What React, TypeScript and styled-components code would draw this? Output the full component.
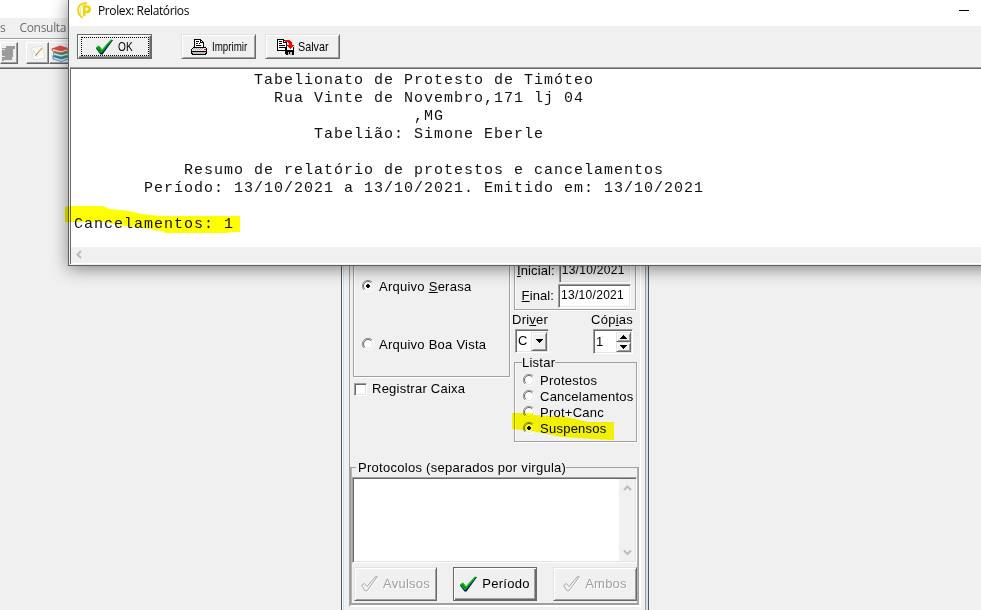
import React from "react";
import styled, { createGlobalStyle, css } from "styled-components";

const Global = createGlobalStyle`
  html, body { margin: 0; padding: 0; overflow: hidden; background: #f0f0f0; }
  * { box-sizing: border-box; }
`;

const uiFont = css`
  font-family: "Liberation Sans", Arial, sans-serif;
  font-size: 13px;
  letter-spacing: 0.25px;
  line-height: 16px;
  white-space: nowrap;
  color: #000;
`;

const Desktop = styled.div`
  position: relative;
  display: flex;
  flex-direction: column;
  width: 981px;
  height: 610px;
  overflow: hidden;
  background: #f0f0f0;
  ${uiFont}
`;

/* ---------- main application behind ---------- */

const AppCaption = styled.div`
  flex: none;
  height: 18px;
  background: #fff;
`;

const MenuBar = styled.div`
  flex: none;
  display: flex;
  gap: 14px;
  height: 20px;
  font: 12px/20px "Open Sans", "Noto Sans", sans-serif;
  letter-spacing: -0.3px;
  color: #6d6d6d;
`;

const ToolStrip = styled.div`
  flex: none;
  display: flex;
  height: 31px;
  padding-top: 3px;
  border-top: 1px solid #a0a0a0;
  border-bottom: 1px solid #696969;
  box-shadow: inset 0 1px #fff, inset 0 -1px #a0a0a0;
`;

const ToolButton = styled.div<{ $w: number; $gap?: number }>`
  display: flex;
  align-items: center;
  justify-content: center;
  width: ${(p) => p.$w}px;
  height: 22px;
  margin-right: ${(p) => p.$gap ?? 0}px;
  border: 1px solid;
  border-color: #fff #696969 #696969 #fff;
  box-shadow: inset -1px -1px #a0a0a0;
`;

const Workspace = styled.div`
  flex: 1;
  display: flex;
  padding-left: 341px;
`;

/* ---------- form window ---------- */

const FormWindow = styled.div`
  width: 308px;
  height: 541px;
  border-left: 1px solid #50555a;
  border-right: 1px solid #50555a;
  box-shadow: inset 1px 0 #fff, inset 2px 0 #cfe0ee, inset -2px 0 #d3e0ec, inset -3px 0 #969ca4;
  padding: 180px 7px 0 7px;
`;

const Panel = styled.div`
  width: 292px;
  height: 358px;
  border-left: 1px solid #a0a0a0;
  border-right: 1px solid #fff;
  border-bottom: 1px solid #fff;
`;

const Columns = styled.div`
  display: flex;
  gap: 3px;
  height: 218px;
  padding-left: 3px;
`;

const LeftColumn = styled.div`
  width: 158px;
`;

const RightColumn = styled.div`
  width: 123px;
`;

const Etched = styled.div<{ $h: number }>`
  height: ${(p) => p.$h}px;
  border: 1px solid #a0a0a0;
  box-shadow: 1px 1px #fff, inset 1px 0 #fff;
`;

const FileGroup = styled(Etched)`
  width: 157px;
  padding: 29px 0 0 8px;
`;

const Choice = styled.label<{ $h: number; $gap: number }>`
  display: flex;
  align-items: center;
  gap: ${(p) => p.$gap}px;
  height: ${(p) => p.$h}px;
`;

const RadioSlot = styled.span`
  display: flex;
  height: 14px;
`;

const CheckRow = styled.div`
  display: flex;
  align-items: center;
  gap: 5px;
  height: 16px;
  margin: 4px 0 0 1px;
`;

const CheckBox = styled.span`
  width: 13px;
  height: 13px;
  background: #fff;
  border: 1px solid;
  border-color: #a0a0a0 #fff #fff #a0a0a0;
  box-shadow: inset 1px 1px #696969, inset -1px -1px #e3e3e3;
`;

const DateGroup = styled(Etched)`
  width: 122px;
  padding: 9px 4px 0 2px;
`;

const Field = styled.div`
  display: flex;
  justify-content: flex-end;
  align-items: center;
  gap: 4px;
  height: 23px;
  margin-bottom: 2px;
  letter-spacing: 0.1px;
`;

const Edit = styled.div<{ $w: number; $h: number; $dim?: boolean }>`
  display: flex;
  align-items: center;
  width: ${(p) => p.$w}px;
  height: ${(p) => p.$h}px;
  padding: 0 0 1px 2px;
  font-size: 12px;
  letter-spacing: 0.3px;
  background: ${(p) => (p.$dim ? "#f0f0f0" : "#fff")};
  border: 1px solid;
  border-color: #a0a0a0 #fff #fff #a0a0a0;
  box-shadow: inset 1px 1px #696969, inset -1px -1px #e3e3e3;
`;

const DriverRow = styled.div`
  display: flex;
  justify-content: space-between;
  height: 16px;
  margin: 2px 4px 0 -2px;
`;

const PickerRow = styled.div`
  display: flex;
  justify-content: space-between;
  height: 25px;
  margin: 1px 4px 0 1px;
`;

const Picker = styled(Edit)`
  justify-content: space-between;
  padding: 2px 1px 2px 2px;
  font-size: 13px;
`;

const DropButton = styled.span`
  display: flex;
  align-items: center;
  justify-content: center;
  width: 16px;
  height: 19px;
  background: #f0f0f0;
  border: 1px solid;
  border-color: #e3e3e3 #696969 #696969 #e3e3e3;
  box-shadow: inset 1px 1px #fff, inset -1px -1px #a0a0a0;
`;

const Spinner = styled.span`
  display: flex;
  flex-direction: column;
  width: 15px;
`;

const SpinButton = styled(DropButton)`
  width: 15px;
  height: 10px;
`;

const Legend = styled.span`
  display: block;
  width: max-content;
  height: 16px;
  background: #f0f0f0;
`;

const ListGroup = styled(Etched)`
  width: 123px;
  margin-top: 8px;
  padding-left: 7px;
`;

const ListLegend = styled(Legend)`
  margin-top: -8px;
`;

const Options = styled.div`
  padding: 2px 0 0 1px;
`;

const ProtocolGroup = styled.div`
  width: 289px;
  height: 138px;
  border: 1px solid #a0a0a0;
  border-bottom-width: 2px;
  box-shadow: inset 1px 0 #b4b4b4, inset -1px 0 #b4b4b4, 1px 1px #fff;
  padding: 0 1px;
`;

const ProtocolLegend = styled(Legend)`
  margin: -8px 0 0 4px;
  padding-left: 2px;
  letter-spacing: 0.28px;
`;

const Memo = styled.div`
  display: flex;
  justify-content: flex-end;
  width: 285px;
  height: 86px;
  margin-top: 1px;
  padding: 1px 1px 1px 2px;
  background: #fff;
  border: 1px solid;
  border-color: #a0a0a0 #fff #fff #a0a0a0;
  box-shadow: inset 1px 1px #696969, inset -1px -1px #e3e3e3;
`;

const VScroll = styled.div`
  display: flex;
  flex-direction: column;
  justify-content: space-between;
  align-items: center;
  width: 16px;
  padding: 5px 0 4px;
  background: #f0f0f0;
`;

const ButtonRow = styled.div`
  display: flex;
  gap: 16px;
  padding: 4px 0 0 2px;
`;

const Button = styled.div<{ $w: number; $h: number; $primary?: boolean; $gap?: number; $muted?: boolean }>`
  display: flex;
  align-items: center;
  justify-content: center;
  gap: ${(p) => p.$gap ?? 5}px;
  width: ${(p) => p.$w}px;
  height: ${(p) => p.$h}px;
  background: #f0f0f0;
  color: ${(p) => (p.$muted ? "#a0a0a0" : "#000")};
  text-shadow: ${(p) => (p.$muted ? "1px 1px #fff" : "none")};
  border: 1px solid;
  border-color: ${(p) => (p.$primary ? "#696969" : "#e3e3e3 #696969 #696969 #e3e3e3")};
  box-shadow: ${(p) =>
    p.$primary
      ? "inset 1px 1px #fff, inset -1px -1px #696969, inset -2px -2px #a0a0a0"
      : "inset 1px 1px #fff, inset -1px -1px #a0a0a0"};
`;

/* ---------- report window ---------- */

const ReportWindow = styled.div`
  position: absolute;
  left: 68px;
  top: -4px;
  width: 960px;
  height: 270px;
  display: flex;
  flex-direction: column;
  background: #f0f0f0;
  border: 1px solid #606060;
  box-shadow: 0 3px 16px rgba(0, 0, 0, 0.45);
`;

const TitleBar = styled.div`
  flex: none;
  display: flex;
  align-items: center;
  height: 29px;
  padding: 0 0 2px 8px;
  background: #fff;
  font: 12px/27px "Open Sans", "Noto Sans", sans-serif;
  letter-spacing: -0.38px;
`;

const Title = styled.span`
  width: 92px;
  margin-left: 6px;
`;

const Minimize = styled.span`
  width: 10px;
  height: 1px;
  margin-left: 769px;
  background: #000;
`;

const Actions = styled.div`
  flex: none;
  display: flex;
  height: 41px;
  padding: 8px 0 0 8px;
`;

const ActionSlot = styled.div<{ $after: number }>`
  margin-right: ${(p) => p.$after}px;
`;

const FocusRing = styled.span`
  display: flex;
  align-items: center;
  justify-content: center;
  gap: 5px;
  width: 68px;
  height: 19px;
  border: 1px dotted #000;
`;

const Narrow = styled.span<{ $w: number; $k: number }>`
  display: block;
  width: ${(p) => p.$w}px;
  font-size: 13px;
  letter-spacing: 0;
  transform: scaleX(${(p) => p.$k});
  transform-origin: 0 50%;
`;

const Report = styled.div`
  flex: 1;
  display: flex;
  flex-direction: column;
  margin: 0 0 1px 1px;
  border-top: 1px solid #a0a0a0;
  border-left: 1px solid #696969;
  box-shadow: inset 0 1px #696969;
  background: #fff;
`;

const ReportText = styled.pre`
  flex: 1;
  margin: 0;
  padding: 4px 0 0 3px;
  font: 15px/18px "Liberation Mono", "Courier New", monospace;
  letter-spacing: 1px;
  color: #111;
`;

const HScroll = styled.div`
  display: flex;
  align-items: center;
  height: 17px;
  padding: 0 0 1px 4px;
  background: #f0f0f0;
  border-bottom: 1px solid #fff;
`;

const Marker = styled.svg<{ $x: number; $y: number }>`
  position: absolute;
  left: ${(p) => p.$x}px;
  top: ${(p) => p.$y}px;
  mix-blend-mode: multiply;
  pointer-events: none;
`;

/* ---------- drawings ---------- */

const Check = () => (
  <svg width="17" height="16" viewBox="0 0 17 16">
    <path d="M0 9.5 3 7.5 6 11 14.5 1 17 1 6.5 15.5 4.5 15.5Z" fill="#000060" />
    <path d="M0 8.5 3 6.5 6 10.5 15 0.5 16.5 1 6 14 4 14Z" fill="#009a10" />
    <path d="M1 8 3 7 6 11 15 1" fill="none" stroke="#20d030" strokeWidth="1" />
  </svg>
);

const MutedCheck = () => (
  <svg width="17" height="16" viewBox="0 0 17 16">
    <path d="M1.5 10.5 4.5 8.5 6.5 11 14.5 2 17 2 6.5 15.8 5 15.8Z" fill="none" stroke="#fff" />
    <path d="M.5 9.5 3.5 7.5 6 10.5 14 1 16.3 .7 6 14.8 4.2 14.8Z" fill="#f0f0f0" stroke="#a0a0a0" strokeWidth=".9" />
  </svg>
);

const Printer = () => (
  <svg width="17" height="16" viewBox="0 0 17 16" shapeRendering="crispEdges">
    <path d="M3.5.5h6l3 3v5h-9z" fill="#fff" stroke="#000" />
    <path d="M9.5.5v3h3M5 2.5h3M5 4.5h2M8 4.5h1M5 6.5h5" stroke="#000" fill="none" />
    <path d="M2.5 8.5h12l1 1v3H.5v-2z" fill="#e8e8e8" stroke="#000" />
    <path d="M.5 12.5h15v2h-1v1h-13v-1h-1z" fill="#bdbdbd" stroke="#000" />
    <path d="M3 9.5h10M2 10.5h10" stroke="#aaa" strokeDasharray="1 1" />
    <path d="M13 10h2v1h-2z" fill="#e00000" />
  </svg>
);

const SaveIcon = () => (
  <svg width="17" height="16" viewBox="0 0 17 16" shapeRendering="crispEdges">
    <path d="M.5.5h6l3 3v8h-9z" fill="#fff" stroke="#000" />
    <path d="M6.5.5v3h3M2 2.5h3M2 4.5h3M2 6.5h6M2 8.5h6" stroke="#000" fill="none" />
    <path d="M8 1h5v1h1v1h1v3h2v1h-1v1h-1v1h-1v1h-1V9h-1V8h-1V7h-1V6h2V4h-1V3H8z" fill="#f00" />
    <path d="M8 8h3v2h4V8h2v8H9v-1H8z" fill="#000" />
    <path d="M10 8h1v1h1v1h2V9h1V8h1v3h-6z" fill="#fff" />
    <path d="M11 13h4v3h-4z" fill="#b8b8b8" />
    <path d="M12 13h1v2h-1z" fill="#000" />
  </svg>
);

const Logo = () => (
  <svg width="15" height="17" viewBox="0 0 15 17">
    <path d="M10 1.2C4 .5 1 4 1 8s3 7.5 5 7.6" fill="none" stroke="#f0d000" strokeWidth="1.6" />
    <path d="M9.5 2.2C5 2.5 3.2 5.5 3.2 8.2S4 12 4.5 13" fill="none" stroke="#f5e25a" strokeWidth="1" />
    <path d="M7.2 14V4.5H10c3.6 0 3.6 5.5 0 5.5H8" fill="none" stroke="#f2d40a" strokeWidth="2.6" />
  </svg>
);

const Machine = () => (
  <svg width="15" height="18" viewBox="0 0 15 18" shapeRendering="crispEdges">
    <path d="M0 4h4V2h9v3h-2v8h-1v3H2v1H0z" fill="#9c9c9c" />
    <path d="M0 5.5h3M0 12.5h3M11.5 5v8M10.5 13v3H3" fill="none" stroke="#e8e8e8" />
  </svg>
);

const NoteIcon = () => (
  <svg width="18" height="18" viewBox="0 0 18 18">
    <path d="M2 4 13 2 16 14 5 16Z" fill="#fbfbfb" stroke="#e2e2e2" />
    <path d="M4 6 8 13" stroke="#d0d0d0" />
    <path d="M8 10 13 4" stroke="#e9a765" strokeWidth="1.4" />
    <path d="M6.5 11.5 8.2 9.8" stroke="#777" />
  </svg>
);

const Books = () => (
  <svg width="18" height="18" viewBox="0 0 18 18">
    <path d="M1 12 9 9l9 3-8 4.5z" fill="#2e7fb4" />
    <path d="M2 12.5 10 15l8-2v2l-8 2.5L2 15z" fill="#d6e6ee" stroke="#286f9e" strokeWidth=".7" />
    <path d="M2 8 9 5.5 18 8l-8 4z" fill="#2f9a63" />
    <path d="M2.5 8.5 10 10.8l8-2v2L10 13l-7.5-2z" fill="#e7f1ea" stroke="#2d8a5b" strokeWidth=".7" />
    <path d="M1 4.5 9 1.5 17 4l-7 3.5z" fill="#df4d43" />
    <path d="M1 4.5 10 6.8l7-2v2L10 9 1.5 7z" fill="#f2e6e2" stroke="#d63c34" strokeWidth=".8" />
  </svg>
);

const Radio = ({ on }: { on?: boolean }) => (
  <RadioSlot>
    <svg width="12" height="12" viewBox="0 0 12 12">
      <circle cx="6" cy="6" r="5" fill="#fff" />
      <path d="M2 10A5.5 5.5 0 0 1 10 2" fill="none" stroke="#909090" />
      <path d="M2.8 9.2A4.5 4.5 0 0 1 9.2 2.8" fill="none" stroke="#696969" />
      <path d="M10 2A5.5 5.5 0 0 1 2 10" fill="none" stroke="#fff" />
      <path d="M9.2 2.8A4.5 4.5 0 0 1 2.8 9.2" fill="none" stroke="#e3e3e3" />
      {on && <path d="M5 4h2v1h1v2H7v1H5V7H4V5h1z" fill="#000" shapeRendering="crispEdges" />}
    </svg>
  </RadioSlot>
);

const Triangle = ({ up }: { up?: boolean }) => (
  <svg width="7" height="4" viewBox="0 0 7 4" shapeRendering="crispEdges">
    <path d={up ? "M3 0h1v1h1v1h1v1h1v1H0V3h1V2h1V1h1z" : "M0 0h7v1H6v1H5v1H4v1H3V3H2V2H1V1H0z"} fill="#000" />
  </svg>
);

const chevrons = { up: "M1 6 4.5 2.5 8 6", down: "M1 2.5 4.5 6 8 2.5", left: "M6 1 2.5 4.5 6 8" };
const Chevron = ({ dir }: { dir: keyof typeof chevrons }) => (
  <svg width="9" height="9" viewBox="0 0 9 9">
    <path d={chevrons[dir]} fill="none" stroke="#bcbcbc" strokeWidth="2" />
  </svg>
);

const pad = (n: number, s: string) => " ".repeat(n) + s;
const lines = [
  pad(18, "Tabelionato de Protesto de Timóteo"),
  pad(20, "Rua Vinte de Novembro,171 lj 04"),
  pad(34, ",MG"),
  pad(24, "Tabelião: Simone Eberle"),
  "",
  pad(11, "Resumo de relatório de protestos e cancelamentos"),
  pad(7, "Período: 13/10/2021 a 13/10/2021. Emitido em: 13/10/2021"),
  "",
  "Cancelamentos: 1",
];

const listOptions = ["Protestos", "Cancelamentos", "Prot+Canc", "Suspensos"];

export default function App() {
  return (
    <Desktop>
      <Global />
      <AppCaption />
      <MenuBar>
        <span>s</span>
        <span>Consulta</span>
      </MenuBar>
      <ToolStrip>
        <ToolButton $w={18} $gap={8}><Machine /></ToolButton>
        <ToolButton $w={23}><NoteIcon /></ToolButton>
        <ToolButton $w={22}><Books /></ToolButton>
      </ToolStrip>
      <Workspace>
        <FormWindow>
          <Panel>
            <Columns>
              <LeftColumn>
                <FileGroup $h={128}>
                  <Choice $h={16} $gap={5}><Radio on /><span>Arquivo <u>S</u>erasa</span></Choice>
                  <Choice $h={100} $gap={5}><Radio /><span>Arquivo Boa Vista</span></Choice>
                </FileGroup>
                <CheckRow><CheckBox /><span>Registrar Caixa</span></CheckRow>
              </LeftColumn>
              <RightColumn>
                <DateGroup $h={61}>
                  <Field><span><u>I</u>nicial:</span><Edit $w={73} $h={24} $dim>13/10/2021</Edit></Field>
                  <Field><span><u>F</u>inal:</span><Edit $w={73} $h={24}>13/10/2021</Edit></Field>
                </DateGroup>
                <DriverRow><span>Dri<u>v</u>er</span><span>Cóp<u>i</u>as</span></DriverRow>
                <PickerRow>
                  <Picker $w={34} $h={24}>C<DropButton><Triangle /></DropButton></Picker>
                  <Picker $w={40} $h={25}>
                    1
                    <Spinner>
                      <SpinButton><Triangle up /></SpinButton>
                      <SpinButton><Triangle /></SpinButton>
                    </Spinner>
                  </Picker>
                </PickerRow>
                <ListGroup $h={80}>
                  <ListLegend>Listar</ListLegend>
                  <Options>
                    {listOptions.map((o) => (
                      <Choice key={o} $h={16} $gap={5}><Radio on={o === "Suspensos"} /><span>{o}</span></Choice>
                    ))}
                  </Options>
                </ListGroup>
              </RightColumn>
            </Columns>
            <ProtocolGroup>
              <ProtocolLegend>Protocolos (separados por virgula)</ProtocolLegend>
              <Memo><VScroll><Chevron dir="up" /><Chevron dir="down" /></VScroll></Memo>
              <ButtonRow>
                <Button $w={83} $h={34} $muted><MutedCheck />Avulsos</Button>
                <Button $w={84} $h={34} $primary><Check />Período</Button>
                <Button $w={84} $h={34} $muted><MutedCheck />Ambos</Button>
              </ButtonRow>
            </ProtocolGroup>
          </Panel>
        </FormWindow>
      </Workspace>

      <ReportWindow>
        <TitleBar>
          <Logo />
          <Title>Prolex: Relatórios</Title>
          <Minimize />
        </TitleBar>
        <Actions>
          <ActionSlot $after={29}>
            <Button $w={75} $h={25} $primary>
              <FocusRing><Check /><Narrow $w={15} $k={0.78}>OK</Narrow></FocusRing>
            </Button>
          </ActionSlot>
          <ActionSlot $after={9}>
            <Button $w={75} $h={25} $gap={4}><Printer /><Narrow $w={35} $k={0.75}>Imprimir</Narrow></Button>
          </ActionSlot>
          <ActionSlot $after={0}>
            <Button $w={75} $h={25} $gap={4}><SaveIcon /><Narrow $w={30} $k={0.83}>Salvar</Narrow></Button>
          </ActionSlot>
        </Actions>
        <Report>
          <ReportText>{lines.join("\n")}</ReportText>
          <HScroll><Chevron dir="left" /></HScroll>
        </Report>
      </ReportWindow>

      <Marker $x={65} $y={205} width="176" height="29" viewBox="0 0 176 29">
        <path d="M0 2 6 1H38l6 3 20 2 12 3 20 2H175V27H164V28H100V27l-14-3-18-2-14-2-14-3H0Z" fill="#ff0" />
      </Marker>
      <Marker $x={512} $y={412} width="103" height="29" viewBox="0 0 103 29">
        <path d="M0 1H21V3L54 5 76 10H102V28L80 27 50 25 20 19 0 17Z" fill="#ff0" />
      </Marker>
    </Desktop>
  );
}
